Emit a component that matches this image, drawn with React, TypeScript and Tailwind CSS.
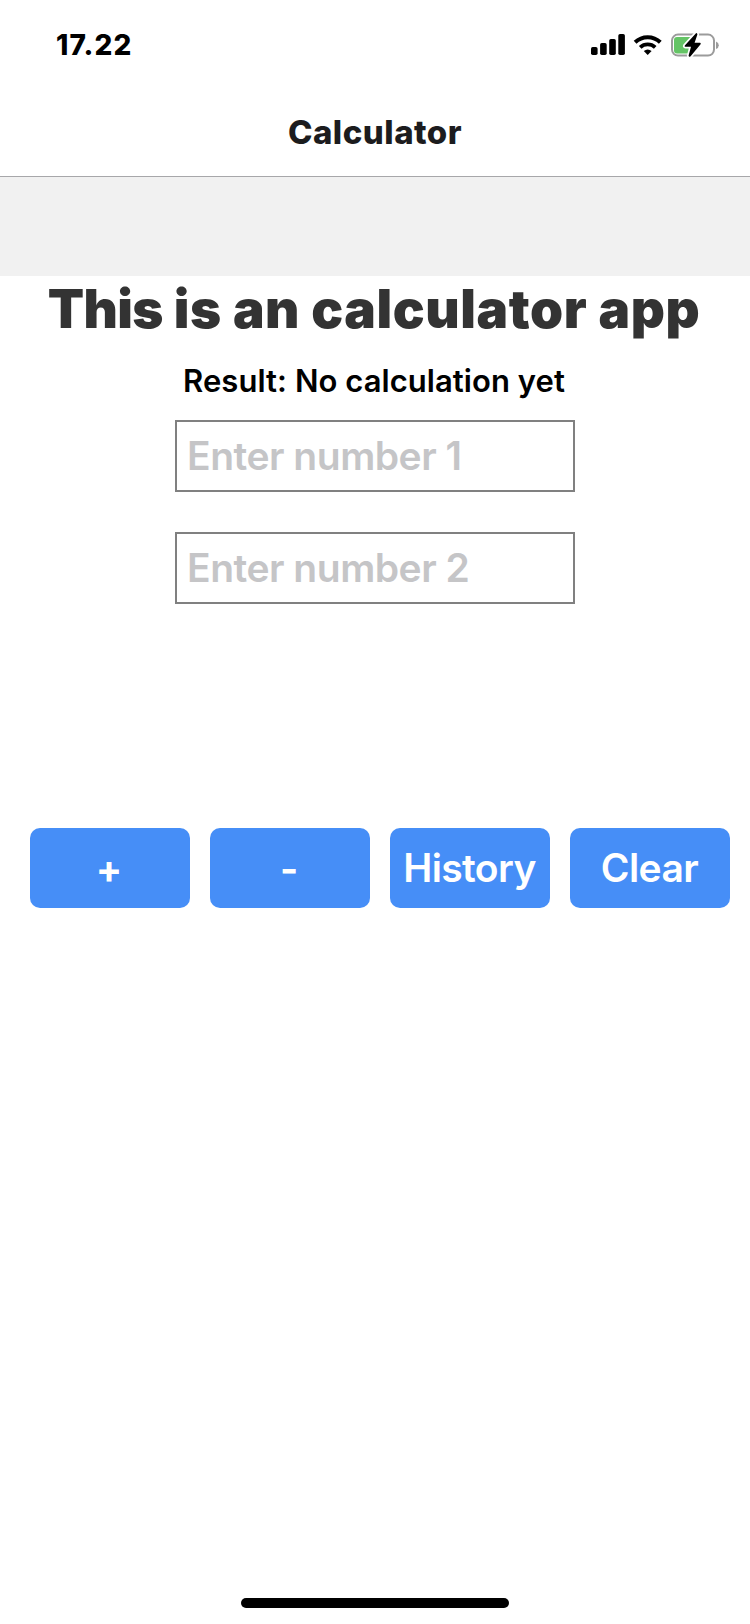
import React from "react";

function SignalIcon() {
  return (
    <svg width="34" height="22" viewBox="0 0 34 22" fill="#000">
      <rect x="0" y="13" width="6.6" height="8" rx="1.7" />
      <rect x="9.1" y="9" width="6.6" height="12" rx="1.7" />
      <rect x="18.2" y="5" width="6.6" height="16" rx="1.7" />
      <rect x="27.3" y="0" width="6.6" height="21" rx="1.7" />
    </svg>
  );
}

function WifiIcon() {
  return (
    <svg width="30" height="22" viewBox="0 0 30 22" fill="none" stroke="#000">
      <path d="M2.1 8.3a18.2 18.2 0 0 1 25.2 0" strokeWidth="4" />
      <path d="M7.2 13.4a11 11 0 0 1 15 0" strokeWidth="3.8" />
      <path d="M14.7 20.9l-3.9-3.9q3.9-3.2 7.8 0z" fill="#000" stroke="none" />
    </svg>
  );
}

function BatteryIcon() {
  return (
    <svg width="48" height="26" viewBox="0 0 48 26">
      <rect x="1" y="2.6" width="42" height="21" rx="6" fill="#fff" stroke="#9b9b9b" strokeWidth="2" />
      <path d="M45 9.4q2.8 1 2.8 3.8T45 17z" fill="#9b9b9b" />
      <path d="M6 5h14v16.4H6q-3 0-3-3V8q0-3 3-3z" fill="#65c466" />
      <path
        d="M25 1.2L13.8 13.4Q13.2 14.8 14.4 14.8H20L17.6 23.6Q18 25.6 19.6 24.2L29.6 12.2Q30.2 10.8 28.8 10.8H23.6L26.4 2.6Q26.2 .6 25 1.2z"
        fill="#000"
        stroke="#fff"
        strokeWidth="3.4"
        paintOrder="stroke"
      />
    </svg>
  );
}

function NumberField({ placeholder }: { placeholder: string }) {
  return (
    <input
      placeholder={placeholder}
      className="block h-[72px] w-[400px] border-2 border-[#808080] bg-white pr-[10px] pb-[2px] pl-[10px] text-[39px] font-semibold tracking-[-0.48px] text-black outline-none placeholder:text-[#c5c5c7] placeholder:opacity-100"
    />
  );
}

function ActionButton({ label, symbol = false }: { label: string; symbol?: boolean }) {
  return (
    <button className="flex h-20 w-40 items-center justify-center rounded-[10px] bg-[#468ef7] text-[39px] leading-[80px] text-white">
      <span className={symbol ? "pt-[2px] pr-[2px] font-bold" : "pr-px font-semibold tracking-[-0.6px]"}>{label}</span>
    </button>
  );
}

export default function App() {
  return (
    <div className="flex h-[1624px] w-[750px] flex-col bg-white font-['Inter',sans-serif]">
      <header className="h-[177px] border-b border-[#a7a7aa]">
        <div className="flex h-[88px] items-start justify-between pr-[31px] pl-[56px]">
          <span className="pt-[27px] text-[28px] leading-[36px] font-extrabold tracking-[1.1px]">17.22</span>
          <div className="flex items-start gap-2 pt-[34px]">
            <SignalIcon />
            <WifiIcon />
            <div className="-mt-[2px]">
              <BatteryIcon />
            </div>
          </div>
        </div>
        <h2 className="text-center text-[33px] leading-[88px] font-extrabold tracking-[0.5px] text-[#1c1c1e]">
          Calculator
        </h2>
      </header>
      <div className="h-[99px] bg-[#f1f1f1]" />
      <main className="flex flex-col items-center">
        <h1 className="h-[66px] pr-[2px] text-[53px] leading-[66px] font-black tracking-[0.58px] whitespace-nowrap text-[#333]">
          <span className="tracking-[-0.7px]">This</span> is an calculator app
        </h1>
        <p className="mt-5 h-[38px] pr-[2px] text-[31px] leading-[38px] font-semibold tracking-[0.05px] whitespace-nowrap">
          Result: No calculation yet
        </p>
        <div className="mt-5 flex flex-col gap-10">
          <NumberField placeholder="Enter number 1" />
          <NumberField placeholder="Enter number 2" />
        </div>
        <div className="mt-[224px] flex gap-5 pl-[10px]">
          <ActionButton label="+" symbol />
          <ActionButton label="-" symbol />
          <ActionButton label="History" />
          <ActionButton label="Clear" />
        </div>
      </main>
      <div className="mt-auto mb-4 h-[10px] w-[268px] self-center rounded-full bg-black" />
    </div>
  );
}
